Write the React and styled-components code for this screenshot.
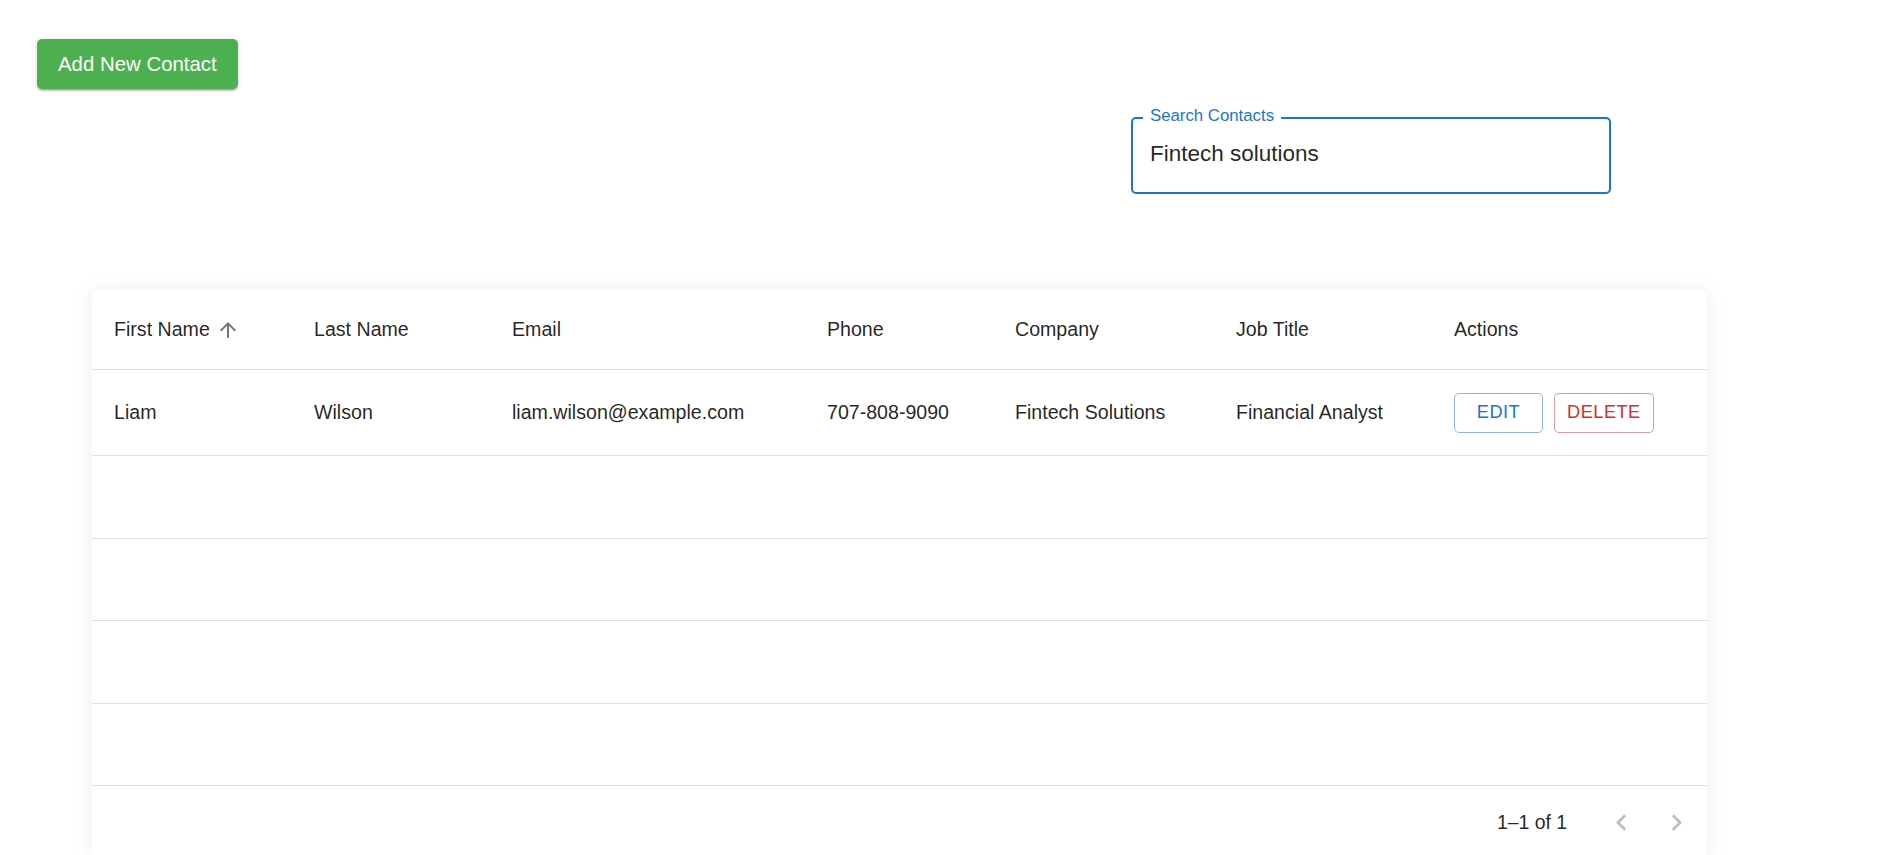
import React from 'react';
import styled, { createGlobalStyle } from 'styled-components';

const GlobalStyle = createGlobalStyle`
  html {
    overflow-y: scroll;
  }

  body {
    margin: 0;
    background: #fff;
    font-family: "Liberation Sans", Arial, sans-serif;
    color: rgba(0, 0, 0, 0.87);
  }

  ::-webkit-scrollbar {
    width: 5px;
  }
  ::-webkit-scrollbar-track {
    background: #f1f1f1;
  }
  ::-webkit-scrollbar-thumb {
    background: #c1c1c1;
  }
`;

const COLUMNS = '200px 198px 315px 188px 221px 218px 1fr';

const Page = styled.div`
  padding: 39px 0 40px;
`;

const Toolbar = styled.div`
  display: flex;
  padding-left: 37px;
`;

const AddButton = styled.button`
  height: 50px;
  padding: 0 21px;
  border: none;
  border-radius: 5px;
  background: #4caf50;
  color: #fff;
  font-family: "Liberation Sans", Arial, sans-serif;
  font-size: 20.4px;
  cursor: pointer;
  box-shadow: 0 3px 1px -2px rgba(0, 0, 0, 0.2), 0 2px 2px 0 rgba(0, 0, 0, 0.14),
    0 1px 5px 0 rgba(0, 0, 0, 0.12);
`;

const SearchRow = styled.div`
  display: flex;
  margin-top: 28px;
  padding-left: 1131px;
`;

const SearchField = styled.div`
  position: relative;
  width: 480px;
  height: 77px;
  box-sizing: border-box;
  border: 2px solid #1976d2;
  border-radius: 5px;
  display: flex;
  align-items: center;
  padding: 0 17px;

  label {
    position: absolute;
    top: -13px;
    left: 10px;
    padding: 0 7px;
    background: #fff;
    color: #1976d2;
    font-size: 16.8px;
    line-height: 20px;
  }

  input {
    flex: 1;
    border: none;
    outline: none;
    padding: 0;
    margin-top: -3px;
    font-family: "Liberation Sans", Arial, sans-serif;
    font-size: 22.5px;
    color: rgba(0, 0, 0, 0.87);
    background: transparent;
  }
`;

const Card = styled.div`
  margin: 96px 0 0 92px;
  width: 1615px;
  background: #fff;
  border-radius: 5px;
  box-shadow: 0 0 22px rgba(0, 0, 0, 0.07);
  overflow: hidden;
`;

const Row = styled.div`
  display: grid;
  grid-template-columns: ${COLUMNS};
  align-items: center;
  box-sizing: border-box;
  height: ${({ h }) => h}px;
  border-bottom: 1px solid #e0e0e0;
  font-size: 19.6px;
`;

const Cell = styled.div`
  padding-left: 22px;
  display: flex;
  align-items: center;
  gap: ${({ gap }) => gap || 0}px;
  white-space: nowrap;
`;

const SortIcon = styled.svg`
  width: 24px;
  height: 24px;
  fill: rgba(0, 0, 0, 0.54);
  margin-left: 6px;
`;

const ActionButton = styled.button`
  height: 40px;
  min-width: 89px;
  padding: 0 12px;
  box-sizing: border-box;
  background: #fff;
  border-radius: 5px;
  border: 1px solid ${({ color }) => color}80;
  color: ${({ color }) => color};
  font-family: "Liberation Sans", Arial, sans-serif;
  font-size: 18.2px;
  letter-spacing: 0.5px;
  text-transform: uppercase;
  cursor: pointer;
`;

const Footer = styled.div`
  display: flex;
  justify-content: flex-end;
  align-items: center;
  height: 72px;
  padding-right: 3px;
  font-size: 19.4px;
`;

const PageActions = styled.div`
  display: flex;
  margin-left: 27px;
`;

const IconButton = styled.button`
  width: 55px;
  height: 55px;
  padding: 0;
  border: none;
  background: none;
  display: flex;
  align-items: center;
  justify-content: center;

  svg {
    width: 33px;
    height: 33px;
    fill: rgba(0, 0, 0, 0.26);
  }
`;

const contacts = [
  {
    first: 'Liam',
    last: 'Wilson',
    email: 'liam.wilson@example.com',
    phone: '707-808-9090',
    company: 'Fintech Solutions',
    title: 'Financial Analyst',
  },
];

const EMPTY_ROWS = [83, 82, 83, 82];

export default function App() {
  return (
    <>
      <GlobalStyle />
      <Page>
        <Toolbar>
          <AddButton>Add New Contact</AddButton>
        </Toolbar>

        <SearchRow>
          <SearchField>
            <label>Search Contacts</label>
            <input defaultValue="Fintech solutions" />
          </SearchField>
        </SearchRow>

        <Card>
          <Row h={80}>
            <Cell>
              First Name
              <SortIcon viewBox="0 0 24 24">
                <path d="M4 12l1.41 1.41L11 7.83V20h2V7.83l5.58 5.59L20 12l-8-8-8 8z" />
              </SortIcon>
            </Cell>
            <Cell>Last Name</Cell>
            <Cell>Email</Cell>
            <Cell>Phone</Cell>
            <Cell>Company</Cell>
            <Cell>Job Title</Cell>
            <Cell>Actions</Cell>
          </Row>

          {contacts.map((c) => (
            <Row h={86} key={c.email}>
              <Cell>{c.first}</Cell>
              <Cell>{c.last}</Cell>
              <Cell>{c.email}</Cell>
              <Cell>{c.phone}</Cell>
              <Cell>{c.company}</Cell>
              <Cell>{c.title}</Cell>
              <Cell gap={11}>
                <ActionButton color="#1976d2">Edit</ActionButton>
                <ActionButton color="#d32f2f">Delete</ActionButton>
              </Cell>
            </Row>
          ))}

          {EMPTY_ROWS.map((h, i) => (
            <Row h={h} key={i} />
          ))}

          <Footer>
            <span>1–1 of 1</span>
            <PageActions>
              <IconButton disabled>
                <svg viewBox="0 0 24 24">
                  <path d="M15.41 16.59 10.83 12l4.58-4.59L14 6l-6 6 6 6 1.41-1.41z" />
                </svg>
              </IconButton>
              <IconButton disabled>
                <svg viewBox="0 0 24 24">
                  <path d="M8.59 16.59 13.17 12 8.59 7.41 10 6l6 6-6 6-1.41-1.41z" />
                </svg>
              </IconButton>
            </PageActions>
          </Footer>
        </Card>
      </Page>
    </>
  );
}
